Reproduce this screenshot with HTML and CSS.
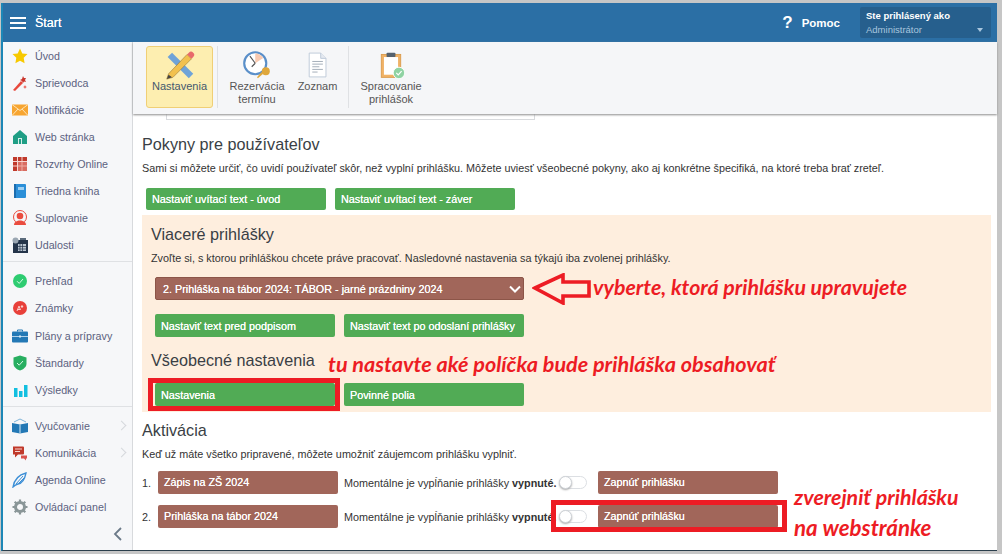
FILE: index.html
```html
<!DOCTYPE html>
<html lang="sk">
<head>
<meta charset="utf-8">
<title>Štart</title>
<link rel="stylesheet" href="styles.css">
</head>
<body>
<div class="frame">
  <header class="topbar">
    <div class="burger"><span></span><span></span><span></span></div>
    <div class="title">Štart</div>
    <div class="help"><span class="help-q">?</span><span class="help-t">Pomoc</span></div>
    <div class="user">
      <div class="user-a">Ste prihlásený ako</div>
      <div class="user-b"><span>Administrátor</span><i class="caret"></i></div>
    </div>
  </header>
  <div class="body">
    <nav class="side">
      <a class="item"><svg class="ic" viewBox="0 0 16 16"><path d="M8 .5l2.300 4.900 5.200.7-3.800 3.700.9 5.400L8 12.700l-4.600 2.500.9-5.400L.5 6.100l5.200-.7z" fill="#f7c900"/></svg>Úvod</a>
      <a class="item"><svg class="ic" viewBox="0 0 16 16"><path d="M1 15l8-9 2 2-8 8z" fill="#e8483c"/><path d="M11 1l1 2 2 0-1 2 1 2-2-.5-1 1.500-1-2-2-1 2-1z" fill="#c9352c"/><path d="M13 10l.6 1.400 1.400.6-1.400.6-.6 1.400-.6-1.400-1.400-.6 1.400-.6z" fill="#e8483c"/></svg>Sprievodca</a>
      <a class="item"><svg class="ic" viewBox="0 0 16 16"><rect y="2.500" width="16" height="11" fill="#f7a531"/><path d="M0 2.500l8 6 8-6M0 13.500l6-6.500M16 13.500l-6-6.500" fill="none" stroke="#fde3b5"/></svg>Notifikácie</a>
      <a class="item"><svg class="ic" viewBox="0 0 16 16"><path d="M8 1l7 6v8H1V7z" fill="#1f9e85"/><rect x="6" y="9" width="4" height="6" fill="#d5efe9"/><rect x="7" y="10" width="2" height="5" fill="#1f9e85"/></svg>Web stránka</a>
      <a class="item"><svg class="ic" viewBox="0 0 16 16"><rect x="1" y="1" width="14" height="14" fill="#c0392b"/><path d="M5.500 1v14M10 1v14M1 5.500h14M1 10h14" stroke="#f6d5d0"/><rect x="6" y="6" width="9" height="9" fill="#e88f85" opacity=".6"/></svg>Rozvrhy Online</a>
      <a class="item"><svg class="ic" viewBox="0 0 16 16"><rect x="3" y="1" width="11" height="14" rx="1" fill="#2b8fd8"/><rect x="2" y="1" width="2" height="14" fill="#1c6cae"/><rect x="6" y="4" width="6" height="3" fill="#9fd0f2"/></svg>Triedna kniha</a>
      <a class="item"><svg class="ic" viewBox="0 0 16 16"><circle cx="8" cy="7" r="6.500" fill="none" stroke="#ea4c3f"/><circle cx="8" cy="6" r="3.300" fill="#ea4c3f"/><path d="M2 15c0-3 3-4.500 6-4.500s6 1.500 6 4.500z" fill="#ea4c3f"/></svg>Suplovanie</a>
      <a class="item"><svg class="ic" viewBox="0 0 16 16"><rect x="1" y="3" width="15" height="13" fill="#24344a"/><rect x="6" y="7" width="8" height="7" fill="#b9c4cf"/><path d="M8 7v7M10.500 7v7M6 9.500h8M6 12h8" stroke="#24344a" stroke-width=".7"/><circle cx="3.500" cy="3.500" r="3" fill="#9aa6b2"/><rect x="8" y="1" width="6" height="2" fill="#5b6b7c"/></svg>Udalosti</a>
      <hr class="sep sep-a">
      <a class="item"><svg class="ic" viewBox="0 0 16 16"><circle cx="8" cy="8" r="7" fill="#2ecc71"/><path d="M5 8.200l2.200 2.200L11 6" fill="none" stroke="#d8f7e5" stroke-width="1"/></svg>Prehľad</a>
      <a class="item"><svg class="ic" viewBox="0 0 16 16"><circle cx="8" cy="8" r="7" fill="#e8403a"/><path d="M5 11l2-5 1.500 4M6 9.500h2M10 5v3M8.800 6.500h2.400" fill="none" stroke="#f9d0ce"/></svg>Známky</a>
      <a class="item item-plany"><svg class="ic" viewBox="0 0 16 16"><path d="M5.500 3.500V2h5v1.500" fill="none" stroke="#2378b5"/><rect y="3.500" width="16" height="11" rx="1" fill="#2378b5"/><path d="M0 8.500h16" stroke="#d5e9f6" stroke-width=".8"/><rect x="7" y="7.500" width="2" height="2" fill="#d5e9f6"/></svg>Plány a prípravy</a>
      <a class="item"><svg class="ic" viewBox="0 0 16 16"><path d="M8 .5l6.500 2v6c0 3.500-3 5.800-6.500 7-3.500-1.200-6.500-3.500-6.500-7v-6z" fill="#27ae60"/><path d="M5 8l2.200 2.200L11 6" fill="none" stroke="#d8f7e5"/></svg>Štandardy</a>
      <a class="item"><svg class="ic" viewBox="0 0 16 16"><rect x="2" y="6" width="3.500" height="9" fill="#12bfe0"/><rect x="7" y="9" width="3.500" height="6" fill="#12bfe0"/><rect x="12" y="3" width="3.500" height="12" fill="#12bfe0"/></svg>Výsledky</a>
      <hr class="sep sep-b">
      <a class="item"><svg class="ic" viewBox="0 0 16 16"><path d="M0 5l8 1.500L16 5v9l-8 1.500L0 14z" fill="#2378b5"/><path d="M8 6.500v9" stroke="#d5e9f6"/><path d="M2 4l6-3 6 3" fill="none" stroke="#7fb4d8"/></svg>Vyučovanie<i class="more"></i></a>
      <a class="item"><svg class="ic" viewBox="0 0 16 16"><path d="M1 1.500h10a1 1 0 0 1 1 1v6a1 1 0 0 1-1 1H6l-3 3v-3H1z" fill="#c0392b"/><path d="M9 10.500h6v3h-1v2l-2-2H9z" fill="#d9534f"/><path d="M3 4h7M3 6.500h5" stroke="#f6d5d0"/></svg>Komunikácia<i class="more"></i></a>
      <a class="item"><svg class="ic" viewBox="0 0 16 16"><path d="M1 15c1-6 5-12 13-14-1 5-3 10-8 11-2 .5-3 1-5 3z" fill="none" stroke="#3d8fd6" stroke-width="1.300"/><path d="M4 12l7-8M7 11l5-5" stroke="#3d8fd6"/></svg>Agenda Online</a>
      <a class="item"><svg class="ic" viewBox="0 0 16 16"><circle cx="8" cy="8" r="4.500" fill="none" stroke="#8a9698" stroke-width="3"/><path d="M8 .5v3M8 12.500v3M.5 8h3M12.500 8h3M2.700 2.700l2.100 2.100M11.200 11.200l2.100 2.100M13.300 2.700l-2.100 2.100M4.800 11.200l-2.100 2.100" stroke="#8a9698" stroke-width="2.200"/></svg>Ovládací panel</a>
      <div class="collapse"><svg width="10" height="14" viewBox="0 0 10 14"><path d="M8 1L2 7l6 6" fill="none" stroke="#6c7a89" stroke-width="1.800"/></svg></div>
    </nav>
    <main class="main">
      <div class="toolbar">
        <div class="tool tool-on">
          <svg class="tool-ic" viewBox="0 0 34 34"><path d="M3 8l5-5 24 24-5 5z" fill="#6fa3d8"/><path d="M4 27L25 5l5 5L9 31l-7 2z" fill="#f2c14e" stroke="#8a6d2f" stroke-width=".6"/><path d="M25 5l2-2a3 3 0 0 1 5 5l-2 2z" fill="#e86a6a"/><path d="M4 28l-2 5 6-2z" fill="#444"/></svg>
          <span>Nastavenia</span>
        </div>
        <div class="tsep"></div>
        <div class="tool tool-w">
          <svg class="tool-ic" viewBox="0 0 34 34"><circle cx="15" cy="15" r="12.500" fill="#fff" stroke="#5a8fc9" stroke-width="2.400"/><path d="M15 4a11 11 0 0 1 9 5l-9 6z" fill="#f8c9b0"/><path d="M15 15L9 7M15 15l-4 4" stroke="#555" stroke-width="1.300" fill="none"/><circle cx="27" cy="24" r="4.500" fill="#dfa73b"/><path d="M24 27l-6 5-1-1 5-6z" fill="#dfa73b"/></svg>
          <span>Rezervácia<br>termínu</span>
        </div>
        <div class="tool tool-z">
          <svg class="tool-ic" viewBox="0 0 24 34"><path d="M2.500 3.500h13l6 6v21h-19z" fill="#fff" stroke="#b9c6d6"/><path d="M15.500 3.500v6h6" fill="#e4e9f0" stroke="#b9c6d6"/><path d="M6 13h12M6 16h12M6 19h8M6 22h12M6 25h6" stroke="#9aa4b0"/></svg>
          <span>Zoznam</span>
        </div>
        <div class="tsep tsep-b"></div>
        <div class="tool tool-s">
          <svg class="tool-ic" viewBox="0 0 34 34"><rect x="6" y="5" width="22" height="26" fill="#f0b266" stroke="#d99a4a"/><rect x="9" y="8" width="16" height="20" fill="#fff"/><rect x="12" y="3" width="10" height="5" rx="1" fill="#56626e"/><circle cx="26" cy="26" r="6.500" fill="#8fd3a3" stroke="#fff"/><path d="M23 26l2.200 2.200L29 24" fill="none" stroke="#fff" stroke-width="1.300"/></svg>
          <span>Spracovanie<br>prihlášok</span>
        </div>
      </div>
      <div class="stub"></div>
      <section class="page">
        <h2 class="h h-first">Pokyny pre používateľov</h2>
        <p class="p">Sami si môžete určiť, čo uvidí používateľ skôr, než vyplní prihlášku. Môžete uviesť všeobecné pokyny, ako aj konkrétne špecifiká, na ktoré treba brať zreteľ.</p>
        <div class="btns btns-first">
          <a class="btn green">Nastaviť uvítací text - úvod</a>
          <a class="btn green">Nastaviť uvítací text - záver</a>
        </div>
        <div class="peach">
          <h2 class="h">Viaceré prihlášky</h2>
          <p class="p">Zvoľte si, s ktorou prihláškou chcete práve pracovať. Nasledovné nastavenia sa týkajú iba zvolenej prihlášky.</p>
          <div class="select"><span>2. Prihláška na tábor 2024: TÁBOR - jarné prázdniny 2024</span><svg width="12" height="8" viewBox="0 0 12 8"><path d="M1 1.500l5 5 5-5" fill="none" stroke="#fff" stroke-width="2"/></svg></div>
          <div class="btns btns-mid">
            <a class="btn green btn-p">Nastaviť text pred podpisom</a>
            <a class="btn green btn-p">Nastaviť text po odoslaní prihlášky</a>
          </div>
          <h2 class="h h-gen">Všeobecné nastavenia</h2>
          <div class="btns btns-gen">
            <a class="btn green btn-p">Nastavenia</a>
            <a class="btn green btn-p">Povinné polia</a>
          </div>
        </div>
        <h2 class="h h-akt">Aktivácia</h2>
        <p class="p">Keď už máte všetko pripravené, môžete umožniť záujemcom prihlášku vyplniť.</p>
        <div class="row row-first">
          <span class="num">1.</span>
          <a class="btn brown">Zápis na ZŠ 2024</a>
          <span class="state">Momentálne je vypĺňanie prihlášky <b>vypnuté.</b></span>
          <span class="toggle"><i></i></span>
          <a class="btn brown">Zapnúť prihlášku</a>
        </div>
        <div class="row row-second">
          <span class="num">2.</span>
          <a class="btn brown">Prihláška na tábor 2024</a>
          <span class="state">Momentálne je vypĺňanie prihlášky <b>vypnuté.</b></span>
          <span class="toggle"><i></i></span>
          <a class="btn brown">Zapnúť prihlášku</a>
        </div>
      </section>
    </main>
  </div>
  <svg class="arrow" width="60" height="32" viewBox="0 0 60 32"><path d="M3 15L31 2v7h26v14H31v7z" fill="none" stroke="#ed1c24" stroke-width="3.600"/></svg>
  <div class="note note-1">vyberte, ktorá prihlášku upravujete</div>
  <div class="note note-2">tu nastavte aké políčka bude prihláška obsahovať</div>
  <div class="note note-3">zverejniť prihlášku</div>
  <div class="note note-4">na webstránke</div>
  <div class="mark mark-1"></div>
  <div class="mark mark-2"></div>
</div>
</body>
</html>
```
FILE: styles.css
```css
* { box-sizing: border-box; }
html, body { margin: 0; height: 100%; }
body {
  background: #c6c6c6;
  padding: 3px 5px 3px 1px;
  font-family: "Liberation Sans", Arial, sans-serif;
  color: #333;
  overflow: hidden;
}
.frame {
  position: relative;
  height: 548px;
  border-left: 2px solid #1c86b6;
  border-bottom: 1px solid #2b3f4c;
  background: #fff;
  display: flex;
  flex-direction: column;
}
.topbar {
  height: 39px;
  flex: none;
  background: #2b6fa5;
  color: #fff;
  display: flex;
  align-items: center;
  padding-left: 7px;
}
.burger { width: 16px; display: flex; flex-direction: column; gap: 3px; }
.burger span { height: 2px; background: #fff; }
.title { margin-left: 9px; font-size: 12.500px; text-shadow: 0 0 .5px #fff; }
.help { margin-left: auto; display: flex; align-items: center; font-weight: 700; font-size: 11.500px; }
.help-q { font-size: 17px; margin-right: 9px; }
.user {
  margin: 0 6px 0 20px;
  width: 131px;
  height: 31px;
  background: #265f8d;
  border-radius: 2px;
  padding: 2px 6px;
  font-size: 9.500px;
}
.user-a { font-weight: 700; line-height: 13px; }
.user-b { display: flex; justify-content: space-between; align-items: center; line-height: 15px; color: #a9c6de; }
.caret { border: 3px solid transparent; border-top: 4px solid #a9c6de; border-bottom: 0; margin-right: 2px; }
.body { flex: 1; display: flex; min-height: 0; }
.side {
  width: 130px;
  flex: none;
  background: #f6f7f9;
  border-right: 1px solid #d8dadd;
  position: relative;
}
.item {
  height: 27px;
  display: flex;
  align-items: center;
  padding-left: 9px;
  font-size: 10.700px;
  color: #5b6180;
  position: relative;
}
.item-plany { height: 28px; padding-top: 1px; }
.ic { width: 16px; height: 16px; margin-right: 7px; flex: none; }
.more {
  position: absolute;
  right: 7px;
  top: 10px;
  width: 7px;
  height: 7px;
  border-top: 1.500px solid #d5d8dc;
  border-right: 1.500px solid #d5d8dc;
  transform: rotate(45deg);
}
.sep { margin: 0; border: 0; border-top: 1px solid #dfe1e4; }
.sep-a { margin: 3px 0 5px; }
.sep-b { margin: 3px 0 5px; }
.collapse { position: absolute; right: 9px; bottom: 9px; line-height: 0; }
.main { flex: 1; min-width: 0; }
.toolbar {
  height: 72px;
  background: #f5f6f8;
  box-shadow: 0 1px 2px #8d8d8d;
  padding: 4px 0 0 13px;
  display: flex;
  align-items: flex-start;
  position: relative;
}
.tool {
  height: 62px;
  display: flex;
  flex-direction: column;
  align-items: center;
  padding-top: 4px;
  font-size: 11px;
  line-height: 12.500px;
  text-align: center;
  color: #555;
  flex: none;
}
.tool-ic { height: 30px; width: auto; flex: none; }
.tool-on {
  width: 67px;
  padding-top: 3px;
  background: #fdeeb0;
  border: 1px solid #f0cf75;
  border-radius: 3px;
  color: #44586e;
}
.tool-w { width: 54px; margin-left: 12px; }
.tool-z { width: 39px; margin-left: 14px; }
.tool-s { width: 60px; margin-left: 12px; }
.tsep { width: 1px; height: 62px; background: #dfe1e4; margin-left: 4px; }
.tsep-b { margin-left: 11px; }
.stub {
  height: 6px;
  width: 369px;
  margin-left: 33px;
  border: 1px solid #d8dadd;
  border-top: 0;
}
.page { padding-left: 9px; }
.h { margin: 0; font-size: 16.200px; line-height: 20px; font-weight: 400; color: #3a3f45; }
.h-first { margin-top: 14px; }
.h-gen { margin-top: 13px; }
.h-akt { margin-top: 8px; }
.p { margin: 6px 0 0; font-size: 10.800px; line-height: 16px; color: #333; white-space: nowrap; }
.btns { display: flex; gap: 9px; }
.btns-first { margin: 12px 0 5px 4px; }
.btns-mid { margin-top: 14px; }
.btns-gen { margin-top: 13px; }
.btn {
  width: 180px;
  height: 22px;
  display: flex;
  align-items: center;
  padding-left: 6px;
  font-size: 10.800px;
  color: #fff;
  border-radius: 2px;
  white-space: nowrap;
  flex: none;
  text-shadow: 0 0 .6px #fff;
}
.btn-p { width: 180px; height: 23px; }
.green { background: #51ab55; }
.brown { background: #a1665a; height: 23px; padding-bottom: 1px; }
.peach {
  width: 849px;
  height: 197px;
  background: #feeede;
  padding: 9px 0 0 9px;
}
.peach .p { margin-top: 6px; }
.select {
  width: 369px;
  height: 23px;
  margin: 11px 0 0 4px;
  background: #a1665a;
  border: 1px solid #8c5548;
  border-radius: 2px;
  display: flex;
  justify-content: space-between;
  align-items: center;
  padding: 0 2px 0 7px;
  color: #fff;
  font-size: 10.800px;
  text-shadow: 0 0 .6px #fff;
}
.peach .btns { margin-left: 4px; }
.row { display: flex; align-items: center; font-size: 10.800px; }
.row-first { margin-top: 9px; }
.row-second { margin-top: 11px; }
.num { width: 16px; flex: none; }
.state { margin-left: 6px; width: 214px; flex: none; white-space: nowrap; overflow: hidden; }
.toggle {
  width: 28px;
  height: 13px;
  border: 1px solid #dcdfe3;
  border-radius: 7px;
  background: #fff;
  position: relative;
  flex: none;
  margin: 0 11px 0 1px;
}
.toggle i {
  position: absolute;
  left: -1px;
  top: -1px;
  width: 13px;
  height: 13px;
  border-radius: 50%;
  background: #fff;
  border: 1px solid #cfd3d8;
  box-shadow: 0 1px 2px #aaa;
}
.mark { position: absolute; border: 5px solid #ed1c24; }
.mark-1 { left: 145px; top: 375px; width: 192px; height: 33px; }
.mark-2 { left: 548px; top: 497px; width: 236px; height: 32px; }
.arrow { position: absolute; left: 529px; top: 270px; }
.note {
  position: absolute;
  font-family: "Lato", sans-serif;
  font-style: italic;
  font-weight: 700;
  color: #ed1c24;
  white-space: nowrap;
  line-height: 24px;
}
.note-1 { left: 590px; top: 272px; font-size: 21.300px; }
.note-2 { left: 325px; top: 349px; font-size: 21.600px; }
.note-3 { left: 791px; top: 482px; font-size: 21.300px; }
.note-4 { left: 791px; top: 513px; font-size: 22.300px; }
```
